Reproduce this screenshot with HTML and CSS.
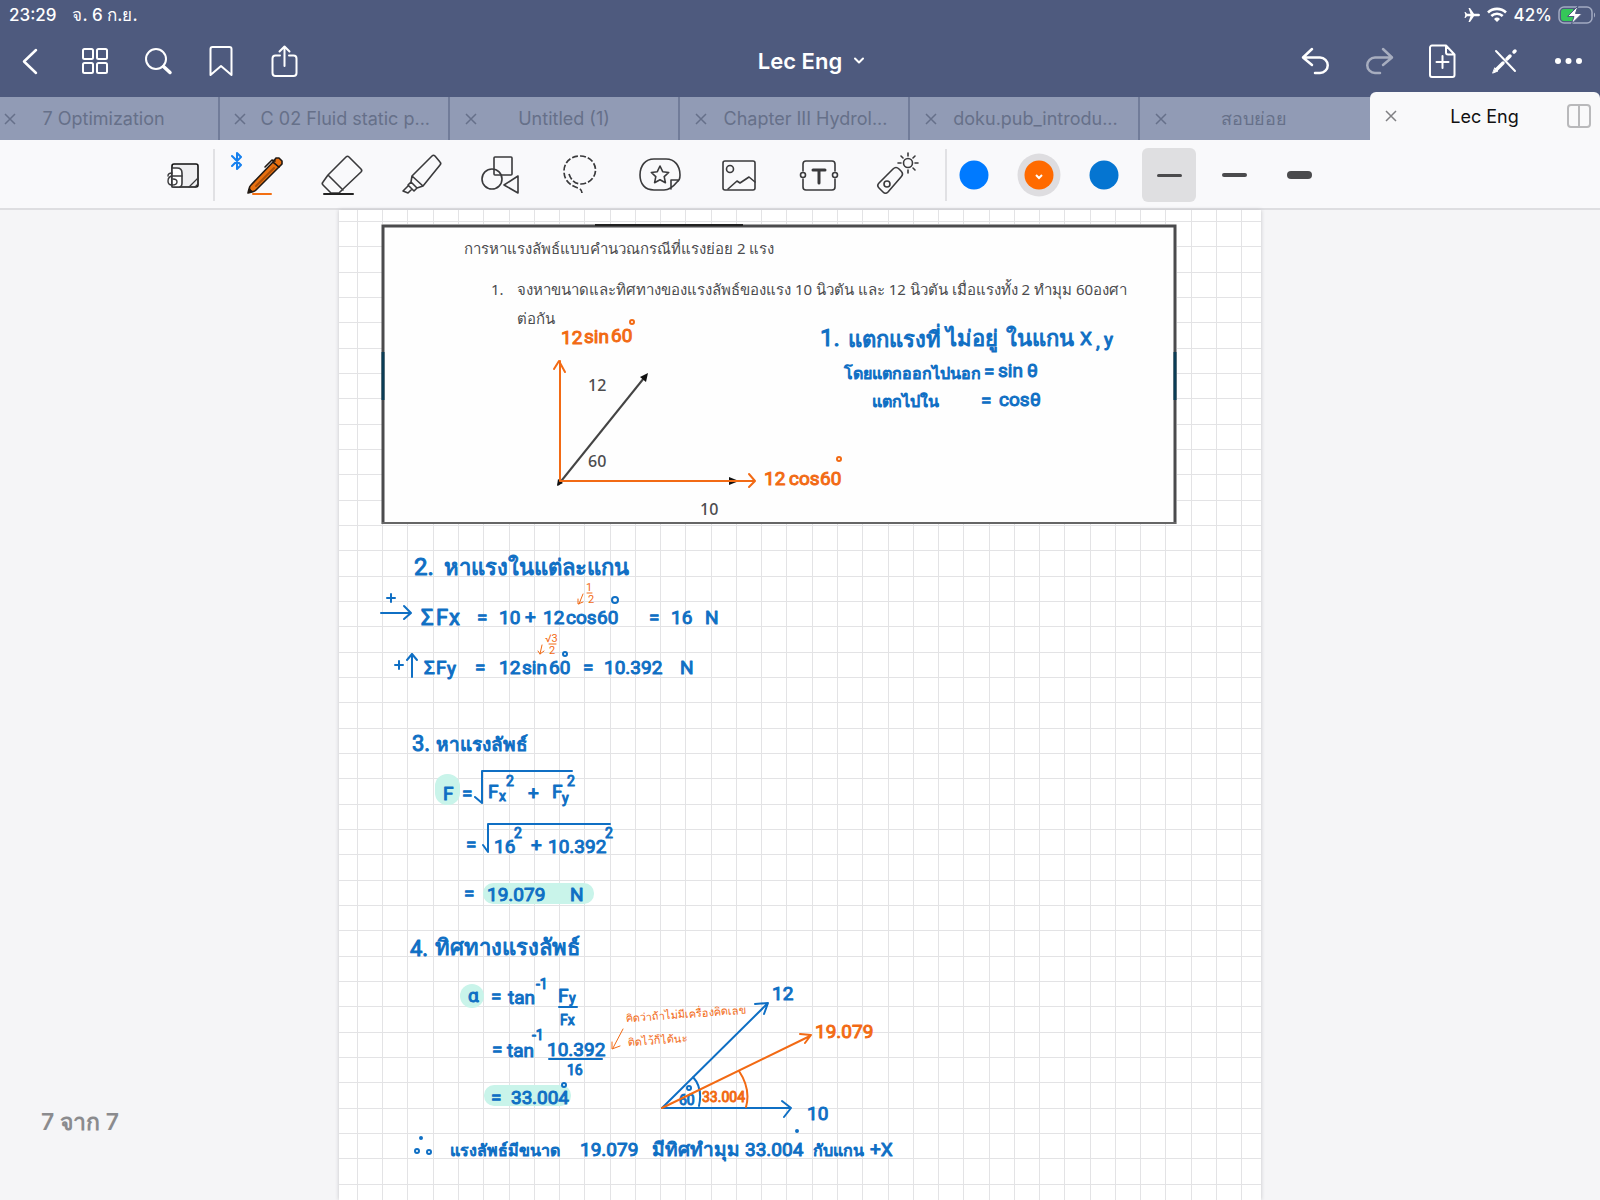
FILE: index.html
```html
<!DOCTYPE html>
<html lang="th">
<head>
<meta charset="utf-8">
<meta name="viewport" content="width=device-width, initial-scale=1">
<title>Lec Eng</title>
<link rel="stylesheet" href="styles.css">
</head>
<body>
<header class="header">
  <div class="status">
    <span>23:29</span>
    <span class="date">จ. 6 ก.ย.</span>
    <span class="status-right">
      <svg width="17" height="16" viewBox="0 0 17 16" fill="#fff"><path d="M16 8c0-1-1-1.300-2-1.300h-4L6 1H4.500l2 5.700H3L1.500 5H.5l.8 3-.8 3h1L3 9.300h3.500l-2 5.700H6l4-5.700h4c1 0 2-.3 2-1.300z"/></svg>
      <svg width="20" height="16" viewBox="0 0 20 16" fill="none" stroke="#fff" stroke-width="2.600"><path d="M1 5.500a13 13 0 0 1 18 0M4.300 9a8.200 8.200 0 0 1 11.400 0"/><path d="M10 15l-3-3a4.300 4.300 0 0 1 6 0z" fill="#fff" stroke="none"/></svg>
      <span>42%</span>
      <svg width="38" height="20" viewBox="0 0 38 20"><rect x="1" y="2" width="33" height="16" rx="5" fill="none" stroke="#a3abc2" stroke-width="1.500"/><path d="M6 4h9v12H6a3 3 0 0 1-3-3V7a3 3 0 0 1 3-3z" fill="#35c759"/><path d="M36 7.500c1.500 1 1.500 4 0 5z" fill="#a3abc2"/><path d="M20 1L9.500 11.500H16L13.500 19 24 8.500h-6.500z" fill="#fff" stroke="#4f5b80" stroke-width="1"/></svg>
    </span>
  </div>
  <nav class="nav">
    <div class="nav-group">
      <button class="nav-btn" aria-label="Back"><svg width="32" height="36" viewBox="0 0 32 36"><path d="M20 7L8 18.500 20 30" stroke-width="2.500"/></svg></button>
      <button class="nav-btn" aria-label="Thumbnails"><svg width="32" height="36" viewBox="0 0 32 36"><rect x="4" y="6" width="10" height="10" rx="1.500"/><rect x="18" y="6" width="10" height="10" rx="1.500"/><rect x="4" y="20" width="10" height="10" rx="1.500"/><rect x="18" y="20" width="10" height="10" rx="1.500"/></svg></button>
      <button class="nav-btn" aria-label="Search"><svg width="32" height="36" viewBox="0 0 32 36"><circle cx="14" cy="16" r="10"/><path d="M21.500 23.500l6.500 6" stroke-width="3.500"/></svg></button>
      <button class="nav-btn" aria-label="Bookmark"><svg width="32" height="36" viewBox="0 0 32 36"><path d="M5.500 32V6a2 2 0 0 1 2-2h17a2 2 0 0 1 2 2v26L16 23z"/></svg></button>
      <button class="nav-btn" aria-label="Share"><svg width="32" height="36" viewBox="0 0 32 36"><path d="M12 12.500H7.500a3 3 0 0 0-3 3V30a3 3 0 0 0 3 3h18a3 3 0 0 0 3-3V15.500a3 3 0 0 0-3-3H21M16.500 23V4M11.500 8.500l5-5 5 5"/></svg></button>
    </div>
    <button class="doc-title">Lec Eng <svg width="10" height="8" viewBox="0 0 10 8"><path d="M1 1.500l4 4 4-4"/></svg></button>
    <div class="nav-group">
      <button class="nav-btn" aria-label="Undo"><svg width="32" height="36" viewBox="0 0 32 36"><path d="M12 6L3 14.500 12 22M4 14.500h16a7.500 7.500 0 0 1 0 15.500h-5" stroke-width="2.500"/></svg></button>
      <button class="nav-btn dim" aria-label="Redo"><svg width="32" height="36" viewBox="0 0 32 36"><path d="M20 6l9 8.500L20 22M28 14.500H12A7.500 7.500 0 0 0 12 30h5" stroke-width="2.500"/></svg></button>
      <button class="nav-btn" aria-label="Add page"><svg width="32" height="36" viewBox="0 0 32 36"><path d="M6 2.500h14l8.500 9V32a2 2 0 0 1-2 2H6a2 2 0 0 1-2-2V4.500a2 2 0 0 1 2-2zM20 3v6.500a2 2 0 0 0 2 2h6M16.500 13v12M10.500 19h12"/></svg></button>
      <button class="nav-btn" aria-label="Read only mode"><svg width="32" height="36" viewBox="0 0 32 36"><path d="M7 8l19 20" stroke-width="2"/><path d="M26 8l-1 1M21 13l-3 3M14 20l-6 6" stroke-width="3.500"/><path d="M4 30l5-2-3-3z" stroke-width="1" fill="#fff"/></svg></button>
      <button class="nav-btn" aria-label="More"><svg width="32" height="36" viewBox="0 0 32 36"><g fill="#fff" stroke="none"><circle cx="6" cy="18" r="3"/><circle cx="16.500" cy="18" r="3"/><circle cx="27" cy="18" r="3"/></g></svg></button>
    </div>
  </nav>
  <div class="tabs">
    <div class="tab"><button class="close" aria-label="Close"><svg width="12" height="12" viewBox="0 0 12 12"><path d="M1 1l10 10M11 1L1 11"/></svg></button><button class="tab-name">7 Optimization</button></div>
    <div class="tab"><button class="close" aria-label="Close"><svg width="12" height="12" viewBox="0 0 12 12"><path d="M1 1l10 10M11 1L1 11"/></svg></button><button class="tab-name long">C 02 Fluid static p...</button></div>
    <div class="tab"><button class="close" aria-label="Close"><svg width="12" height="12" viewBox="0 0 12 12"><path d="M1 1l10 10M11 1L1 11"/></svg></button><button class="tab-name">Untitled (1)</button></div>
    <div class="tab"><button class="close" aria-label="Close"><svg width="12" height="12" viewBox="0 0 12 12"><path d="M1 1l10 10M11 1L1 11"/></svg></button><button class="tab-name long">Chapter III Hydrol...</button></div>
    <div class="tab"><button class="close" aria-label="Close"><svg width="12" height="12" viewBox="0 0 12 12"><path d="M1 1l10 10M11 1L1 11"/></svg></button><button class="tab-name long">doku.pub_introdu...</button></div>
    <div class="tab"><button class="close" aria-label="Close"><svg width="12" height="12" viewBox="0 0 12 12"><path d="M1 1l10 10M11 1L1 11"/></svg></button><button class="tab-name">สอบย่อย</button></div>
    <div class="tab active"><button class="close" aria-label="Close"><svg width="12" height="12" viewBox="0 0 12 12"><path d="M1 1l10 10M11 1L1 11"/></svg></button><button class="tab-name split-name">Lec Eng</button><button class="split" aria-label="Split view"><svg width="24" height="24" viewBox="0 0 24 24"><rect x="1" y="1" width="22" height="22" rx="3"/><path d="M12 1v22"/></svg></button></div>
  </div>
</header>

<div class="toolbar">
  <button class="tool zoom-tool" aria-label="Zoom window"><svg width="36" height="32" viewBox="0 0 36 32"><rect x="7" y="5" width="26" height="23" rx="2" fill="#efeff1" stroke="#111"/><path d="M7 9h5c4 0 5 2 5 5v10c0 3-1 4-3 4H7z" fill="#fff"/><path d="M24 28l9-9M30 28l3-3" stroke-width="1.200"/><path d="M3 17c0-2 2-3 4-3M17 17H8c-4 0-5 3-5 5s1 4 4 4c4 0 5-1 5-3s-1-3-4-3" stroke-width="1.400"/></svg></button>
  <i class="divider"></i>
  <div class="tools">
    <button class="tool pen" aria-label="Pen"><svg width="48" height="48" viewBox="0 0 48 48"><path d="M12 34L34 11l6 5-23 23c-4 4-9-1-5-5z" fill="#e87010" stroke="#221a14" stroke-width="1.600"/><path d="M34 11l3-4 3 0 3 3 0 3-3 3z" fill="#e87010" stroke="#221a14"/><path d="M17 35l18-18" stroke="#a84e08" stroke-width="2"/><path d="M26 16l7-7 3 1" stroke="#221a14"/><path d="M9 42l1-4 3 3z" fill="#221a14" stroke="#221a14"/><path d="M14 43h18" stroke="#f36f12" stroke-width="2"/></svg><svg class="bluetooth" width="12" height="20" viewBox="0 0 12 20"><path d="M1 5l9 9-4 4V2l4 4-9 9" fill="none" stroke="#1680ee" stroke-width="2"/></svg></button>
    <button class="tool" aria-label="Eraser"><svg width="48" height="48" viewBox="0 0 48 48"><path d="M10 24L28 6c1-1 2-1 3 0l12 12c1 1 1 2 0 3L24 39l-3 3h-8l-8-8c-1-1-1-2 0-3zM10 24l15 15"/><path d="M6 43h29" stroke="#222" stroke-width="2"/></svg></button>
    <button class="tool" aria-label="Highlighter"><svg width="48" height="48" viewBox="0 0 48 48"><path d="M14 25L34 5c1-1 2-1 3 0l5 6c1 1 1 2 0 3L25 35zM14 25l-1 6 6 6 6-2M13 31l-3 3 6 6 3-3M10 35l-5 5 5 2 4-4"/></svg></button>
    <button class="tool" aria-label="Shapes"><svg width="48" height="48" viewBox="0 0 48 48"><rect x="17" y="6" width="18" height="18" rx="1"/><circle cx="15" cy="28" r="10"/><path d="M41 25v17L27 34z"/></svg></button>
    <button class="tool" aria-label="Lasso"><svg class="dashed" width="48" height="48" viewBox="0 0 48 48"><path d="M13 23c2 6 6 10 12 10a15 14 0 1 0-1-28C14 5 8 12 8 20c0 11 8 15 14 17 3 1 4 3 4 5" stroke-dasharray="6 2" stroke-width="1.700"/></svg></button>
    <button class="tool" aria-label="Elements"><svg width="48" height="48" viewBox="0 0 48 48"><path d="M18 8h12c9 0 14 7 14 16 0 4-1 6-3 7-4 5-8 8-13 8H18C9 39 4 33 4 24S9 8 18 8zM43 29h-8v9"/><path d="M24 15l2.700 5.700 6 .8-4.500 4.200 1.200 6-5.400-3-5.400 3 1.200-6-4.500-4.200 6-.8z"/></svg></button>
    <button class="tool" aria-label="Image"><svg width="48" height="48" viewBox="0 0 48 48"><rect x="8" y="10" width="32" height="29" rx="2"/><circle cx="15" cy="18" r="3.500"/><path d="M13 38l9-8 3 2 9-6 6 5"/></svg></button>
    <button class="tool" aria-label="Text"><svg width="48" height="48" viewBox="0 0 48 48"><path d="M8 20v-7c0-2 1-3 3-3h26c2 0 3 1 3 3v7M8 28v8c0 2 1 3 3 3h26c2 0 3-1 3-3v-8"/><circle cx="8" cy="24" r="2.500"/><circle cx="40" cy="24" r="2.500"/><path d="M18 19h12M24 19v13" stroke-width="3"/></svg></button>
    <button class="tool" aria-label="Laser pointer"><svg width="48" height="48" viewBox="0 0 48 48"><path d="M5 32l14-14c2-2 4-2 6 0l2 2c2 2 2 4 0 6L14 41c-2 2-4 1-5 0l-4-4c-2-2-1-4 0-5z"/><circle cx="13" cy="33" r="3"/><circle cx="34" cy="12" r="4.500"/><path d="M34 2v3M34 19v3M24 12h3M41 12h3M27 5l2 2M39 17l2 2M41 5l-2 2"/></svg></button>
  </div>
  <i class="divider"></i>
  <div class="swatches">
    <button class="swatch" aria-label="Light blue"><svg width="44" height="44" viewBox="0 0 44 44"><circle cx="22" cy="22" r="14.500" fill="#007aff"/></svg></button>
    <button class="swatch" aria-label="Orange"><svg width="44" height="44" viewBox="0 0 44 44"><circle cx="22" cy="22" r="21.500" fill="#dedde0"/><circle cx="22" cy="22" r="14.500" fill="#ff6a00"/><path d="M19 22l3 3 3-3" fill="none" stroke="#fff" stroke-width="2"/></svg></button>
    <button class="swatch" aria-label="Blue"><svg width="44" height="44" viewBox="0 0 44 44"><circle cx="22" cy="22" r="14.500" fill="#0575d1"/></svg></button>
    <button class="swatch selected" aria-label="Thin"><i class="stroke thin"></i></button>
    <button class="swatch" aria-label="Medium"><i class="stroke medium"></i></button>
    <button class="swatch" aria-label="Thick"><i class="stroke thick"></i></button>
  </div>
</div>

<main class="workspace">
  <p class="page-count">7 จาก 7</p>
  <article class="sheet">
    <svg class="notes" viewBox="339 210 922 990">
      <defs>
        <pattern id="rows" patternUnits="userSpaceOnUse" x="339" y="221" width="922" height="76"><path d="M0 0h922v1H0zM0 25h922v1H0zM0 51h922v1H0z" fill="#e3e3e5"/></pattern>
        <pattern id="cols" patternUnits="userSpaceOnUse" x="357" y="210" width="379" height="990"><path d="M0 0h1v990H0zM25 0h1v990h-1zM50 0h1v990h-1zM76 0h1v990h-1zM101 0h1v990h-1zM126 0h1v990h-1zM152 0h1v990h-1zM177 0h1v990h-1zM202 0h1v990h-1zM227 0h1v990h-1zM253 0h1v990h-1zM278 0h1v990h-1zM303 0h1v990h-1zM328 0h1v990h-1zM354 0h1v990h-1z" fill="#e3e3e5"/></pattern>
      </defs>
      <rect x="339" y="210" width="922" height="990" fill="url(#rows)"/>
      <rect x="339" y="210" width="922" height="990" fill="url(#cols)"/>

      <!-- problem statement -->
      <rect x="382" y="224" width="795" height="300" fill="#fefefe"/>
      <path d="M383 524V226H1175V524" fill="none" stroke="#4b4b4d" stroke-width="3"/>
      <path d="M382 523H1176" stroke="#666" stroke-width="2"/>
      <path d="M595 225H743" stroke="#222" stroke-width="2"/>
      <path d="M383 352V400M1175 352V400" stroke="#0b3c55" stroke-width="3"/>
      <g class="print">
        <text x="464" y="254">การหาแรงลัพธ์แบบคำนวณกรณีที่แรงย่อย 2 แรง</text>
        <text x="491" y="295">1.</text>
        <text x="517" y="295">จงหาขนาดและทิศทางของแรงลัพธ์ของแรง 10 นิวตัน และ 12 นิวตัน เมื่อแรงทั้ง 2 ทำมุม 60องศา</text>
        <text x="517" y="324">ต่อกัน</text>
        <text class="value" x="588" y="391">12</text>
        <text class="value" x="588" y="467">60</text>
        <text class="value" x="700" y="515">10</text>
      </g>
      <path d="M558 485L644 378" stroke="#444" stroke-width="2"/>
      <path d="M648 373l-8 4 6 5zM729 477l10 4-10 4zM557 486l1-7 5 4z" fill="#111"/>

      <g class="ink orange">
        <path d="M560 361V481H754M554 369L559 361 565 372M749 474L755 481 749 487"/>
        <text x="561" y="344">12</text><text x="584" y="343">sin</text><text x="611" y="342">60</text>
        <circle cx="632" cy="322" r="2"/>
        <text x="764" y="485">12</text><text x="789" y="485">cos</text><text x="820" y="485">60</text>
        <circle cx="839" cy="459" r="2"/>
      </g>

      <g class="ink blue">
        <text class="big" x="820" y="346">1.</text>
        <text class="head" x="848" y="347">แตกแรงที่</text>
        <text class="head" x="946" y="346">ไม่อยู่</text>
        <text class="head" x="1006" y="346">ในแกน</text>
        <text x="1080" y="345">X</text><text x="1096" y="348">,</text><text x="1104" y="346">y</text>
        <text class="small" x="844" y="379">โดยแตกออกไปนอก</text>
        <text x="984" y="378">=</text><text x="998" y="377">sin</text><text x="1027" y="377">θ</text>
        <text class="small" x="872" y="407">แตกไปใน</text>
        <text x="981" y="407">=</text><text x="999" y="406">cos</text><text x="1030" y="406">θ</text>
      </g>

      <!-- step 2 -->
      <g class="ink blue">
        <text class="big" x="414" y="575">2.</text>
        <text class="head" x="444" y="575">หาแรงในแต่ละแกน</text>
        <path d="M387 598H395M391 594V602M381 613H410M404 606L411 613 404 619"/>
        <text class="head" x="421" y="625">Σ</text><text class="head" x="436" y="625">F</text><text class="head" x="449" y="625">x</text>
        <text x="477" y="624">=</text><text x="499" y="624">10</text><text x="525" y="624">+</text><text x="543" y="624">12</text><text x="566" y="624">cos</text><text x="597" y="624">60</text>
        <circle cx="615" cy="600" r="3"/>
        <text x="649" y="624">=</text><text x="671" y="624">16</text><text x="705" y="624">N</text>
        <path d="M395 665H403M399 661V669M412 677V654M407 660L412 654 417 660"/>
        <text x="424" y="674">Σ</text><text x="436" y="674">F</text><text x="447" y="675">y</text>
        <text x="475" y="674">=</text><text x="499" y="674">12</text><text x="522" y="674">sin</text><text x="549" y="674">60</text>
        <circle cx="565" cy="654" r="2"/>
        <text x="583" y="674">=</text><text x="604" y="674">10.392</text><text x="680" y="674">N</text>
      </g>
      <g class="ink orange fine">
        <text x="586" y="591">1</text><path d="M587 593H592"/><text x="588" y="603">2</text>
        <path d="M583 594L579 604M578 599L578 604 583 602"/>
        <text x="545" y="642">√3</text><path d="M549 644H556"/><text x="549" y="654">2</text>
        <path d="M542 645L540 654M538 651L540 654 544 651"/>
      </g>

      <!-- step 3 -->
      <g class="mark">
        <rect x="435" y="774" width="25" height="31" rx="12"/>
        <rect x="483" y="883" width="111" height="21" rx="10"/>
        <circle cx="472" cy="996" r="12"/>
        <rect x="484" y="1085" width="87" height="21" rx="10"/>
      </g>
      <g class="ink blue">
        <text class="head" x="412" y="751">3.</text>
        <text x="436" y="751">หาแรงลัพธ์</text>
        <text x="443" y="800">F</text><text x="462" y="800">=</text>
        <path d="M475 797L482 803V771H572"/>
        <text x="488" y="798">F</text><text class="sub" x="499" y="801">x</text><text class="sub" x="506" y="786">2</text>
        <text x="528" y="800">+</text>
        <text x="552" y="798">F</text><text class="sub" x="562" y="803">y</text><text class="sub" x="567" y="786">2</text>
        <text x="466" y="851">=</text>
        <path d="M483 845L488 852V824H610"/>
        <text x="494" y="853">16</text><text class="sub" x="514" y="838">2</text>
        <text x="531" y="852">+</text><text x="548" y="853">10.392</text><text class="sub" x="605" y="838">2</text>
        <text x="464" y="900">=</text><text x="487" y="901">19.079</text><text x="570" y="901">N</text>
      </g>

      <!-- step 4 -->
      <g class="ink blue">
        <text class="head" x="410" y="956">4.</text>
        <text class="head" x="435" y="955">ทิศทางแรงลัพธ์</text>
        <text x="468" y="1002">α</text><text x="491" y="1003">=</text><text x="508" y="1004">tan</text><text class="sub" x="536" y="989">-1</text>
        <text x="558" y="1002">F</text><text class="sub" x="569" y="1003">y</text><path d="M559 1007H577"/><text class="sub" x="560" y="1025">Fx</text>
        <text x="492" y="1056">=</text><text x="507" y="1057">tan</text><text class="sub" x="532" y="1040">-1</text>
        <text x="547" y="1056">10.392</text><path d="M549 1059H602"/><text class="sub" x="567" y="1075">16</text>
        <text x="491" y="1104">=</text><text x="511" y="1104">33</text><text x="532" y="1104">.004</text><circle cx="564" cy="1085" r="2"/>
        <circle cx="421" cy="1138" r="1"/><circle cx="417" cy="1151" r="2"/><circle cx="429" cy="1152" r="2"/>
        <text class="small" x="450" y="1156">แรงลัพธ์มีขนาด</text>
        <text x="580" y="1156">19.079</text>
        <text x="652" y="1156">มีทิศทำมุม</text>
        <text x="745" y="1156">33.004</text><circle cx="797" cy="1131" r="1"/>
        <text class="small" x="813" y="1156">กับแกน</text><text x="870" y="1156">+X</text>
      </g>

      <g class="ink blue">
        <path d="M662 1108L767 1004M755 1004L768 1003 764 1014M662 1108H790M782 1101L791 1108 784 1117M693 1077Q703 1088 699 1106"/>
        <text x="772" y="1000">12</text><text x="807" y="1120">10</text>
        <text class="sub" x="679" y="1105">60</text><circle cx="689" cy="1088" r="2"/>
      </g>
      <g class="ink orange">
        <path d="M662 1108L810 1036M800 1034L811 1035 805 1043M739 1071Q751 1089 746 1107"/>
        <text x="815" y="1038">19.079</text>
        <text class="sub" x="702" y="1102">33.004</text>
      </g>
      <g class="ink orange fine">
        <path d="M623 1029L613 1048M612 1042L612 1049 620 1046"/>
        <text x="626" y="1022" transform="rotate(-4 626 1022)">คิดว่าถ้าไม่มีเครื่องคิดเลข</text>
        <text x="628" y="1046" transform="rotate(-4 628 1046)">ติดไว้ก็ได้นะ</text>
      </g>
    </svg>
  </article>
</main>
</body>
</html>
```
FILE: styles.css
```css
* { box-sizing: border-box; }
body {
  margin: 0;
  min-height: 100vh;
  display: flex;
  flex-direction: column;
  background: #f5f5f7;
  font-family: Inter, "Noto Sans", sans-serif;
}
button {
  margin: 0;
  padding: 0;
  border: 0;
  background: none;
  color: inherit;
  font: inherit;
}
svg { display: block; }

.header { background: #4e5a7e; color: #fff; }
.status {
  display: flex;
  align-items: center;
  height: 29px;
  padding: 0 4px 0 9px;
  font-size: 17px;
  font-weight: 500;
}
.date { margin-left: 16px; }
.status-right { display: flex; align-items: center; gap: 6px; margin-left: auto; }
.nav {
  display: flex;
  align-items: center;
  justify-content: space-between;
  height: 63px;
}
.nav-group { display: flex; }
.nav-btn {
  display: flex;
  justify-content: center;
  width: 63px;
}
.nav-btn svg, .doc-title svg {
  fill: none;
  stroke: #fff;
  stroke-width: 2;
  stroke-linecap: round;
  stroke-linejoin: round;
}
.dim { opacity: .5; }
.doc-title {
  display: flex;
  align-items: center;
  gap: 12px;
  padding-left: 22px;
  font-size: 22px;
  font-weight: 600;
}

.tabs {
  display: flex;
  align-items: flex-end;
  justify-content: flex-end;
  height: 48px;
  overflow: hidden;
}
.tab {
  display: flex;
  align-items: center;
  flex: 0 0 230px;
  height: 43px;
  background: #919bb5;
  border-right: 2px solid #717c99;
  color: #667089;
  font-size: 18px;
}
.tab svg { fill: none; stroke: #66708a; stroke-width: 1.5; }
.close { display: flex; justify-content: center; width: 41px; }
.tab-name { flex: 1; padding-right: 41px; white-space: nowrap; }
.tab-name.long { padding-right: 18px; }
.tab:nth-last-child(2) { border-right-color: #919bb5; }
.tab.active {
  height: 48px;
  border: 0;
  border-radius: 6px 6px 0 0;
  background: #f9f9fa;
  color: #111;
}
.tab.active svg { stroke: #808083; }
.tab-name.split-name { padding-right: 9px; }
.split { margin-right: 9px; }
.tab.active .split svg { stroke: #b9b9bb; stroke-width: 2; }

.toolbar {
  display: flex;
  align-items: center;
  height: 70px;
  padding: 2px 0 0 158px;
  background: #f9f9fb;
  border-bottom: 2px solid #dedee1;
}
.tool {
  position: relative;
  display: flex;
  flex: 1;
  justify-content: center;
}
.tool svg {
  fill: none;
  stroke: #3a3a3c;
  stroke-width: 1.6;
  stroke-linejoin: round;
  stroke-linecap: round;
}
.tool svg.dashed { stroke-linecap: butt; }
.zoom-tool { flex: 0 0 50px; }
.tools { display: flex; flex: 0 0 715px; margin: 0 7px 0 8px; }
.tool .bluetooth { position: absolute; left: 8px; top: 0; }
.divider { width: 2px; height: 52px; background: #e1e1e4; }
.zoom-tool + .divider { margin-left: 5px; }
.swatches { display: flex; gap: 11px; }
.swatch {
  display: flex;
  align-items: center;
  justify-content: center;
  width: 54px;
  height: 54px;
  border-radius: 6px;
}
.selected { background: #dfdfe1; }
.stroke { width: 25px; border-radius: 4px; background: #4b4b4d; }
.thin { height: 3px; }
.medium { height: 4px; }
.thick { height: 8px; }

.workspace { position: relative; flex: 1; }
.page-count {
  position: absolute;
  left: 41px;
  bottom: 64px;
  margin: 0;
  color: #8b8b8e;
  font-size: 23px;
  font-weight: 600;
  line-height: 28px;
}
.sheet {
  max-width: 922px;
  margin: 0 auto;
  background: #fff;
  box-shadow: 0 0 4px #c4c4c8;
}
.notes { width: 100%; height: auto; }
.print { fill: #4c4c4e; font-family: "Noto Sans", sans-serif; font-size: 15px; }
.value { font-size: 16px; font-weight: 500; }
.ink {
  font-family: Roboto, "Noto Sans", sans-serif;
  font-size: 19px;
  font-weight: 400;
  stroke-width: 2;
  stroke-linecap: round;
  stroke-linejoin: round;
}
.ink text { stroke-width: 1; }
.ink path, .ink circle { fill: none; }
.blue { stroke: #0f6fc4; }
.blue text { fill: #0f6fc4; }
.orange { stroke: #f26a14; }
.orange text { fill: #f26a14; }
.big { font-size: 24px; }
.head { font-size: 22px; }
.small { font-size: 16px; }
.sub { font-size: 14px; }
.fine { stroke-width: 1; font-size: 11px; }
.fine text { stroke: none; }
.mark { fill: #c9f4ea; }
```
